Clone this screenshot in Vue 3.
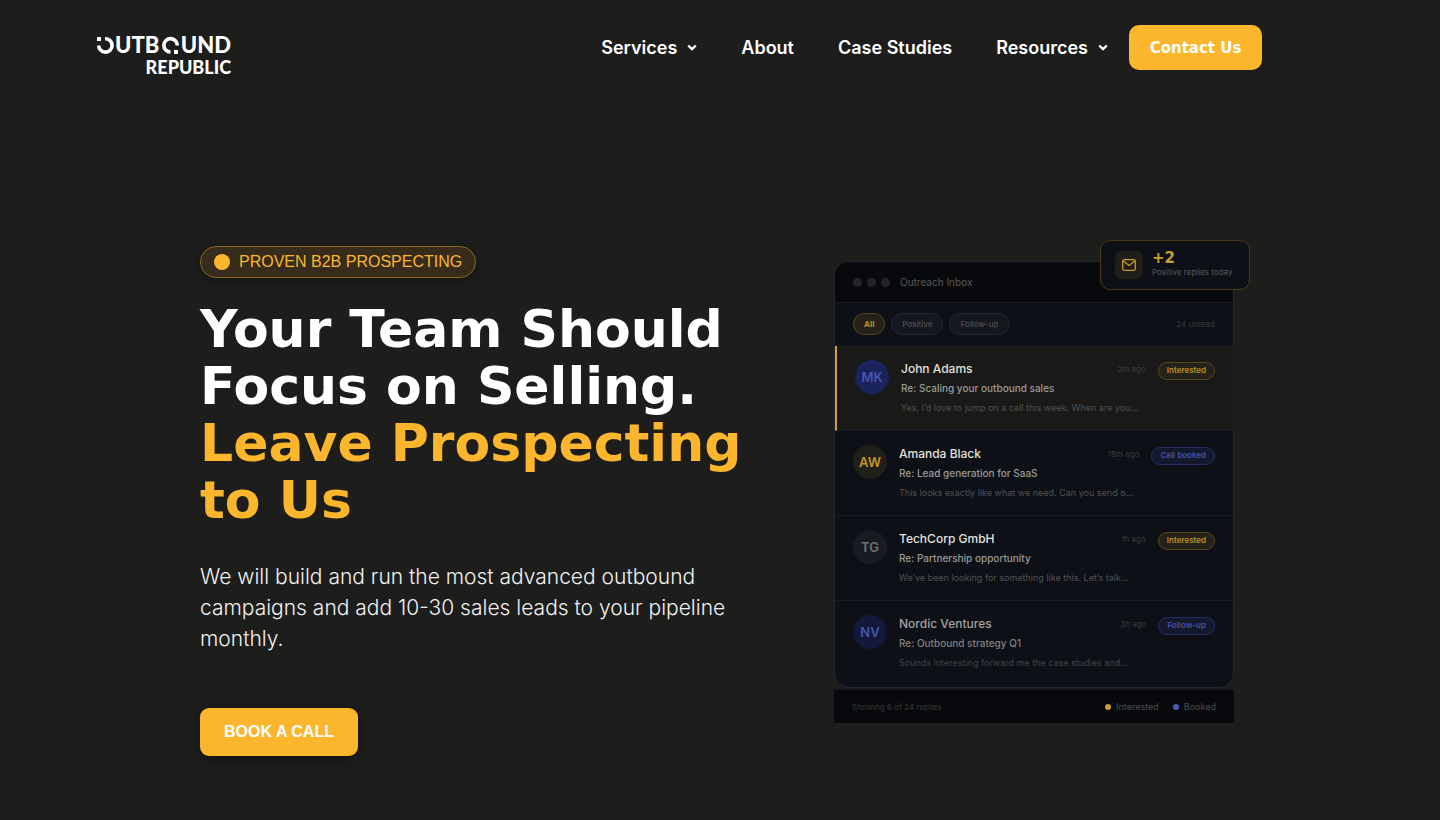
<script setup>
const nav = [
  { label: 'Services', menu: true },
  { label: 'About', menu: false },
  { label: 'Case Studies', menu: false },
  { label: 'Resources', menu: true },
]

const filters = [
  { label: 'All', active: true },
  { label: 'Positive', active: false },
  { label: 'Follow-up', active: false },
]

const replies = [
  { initials: 'MK', tone: 'royal', name: 'John Adams', time: '2m ago', subject: 'Re: Scaling your outbound sales', preview: 'Yes, I’d love to jump on a call this week. When are you…', tag: 'Interested', tagTone: 'gold', active: true },
  { initials: 'AW', tone: 'gold', name: 'Amanda Black', time: '18m ago', subject: 'Re: Lead generation for SaaS', preview: 'This looks exactly like what we need. Can you send o…', tag: 'Call booked', tagTone: 'blue' },
  { initials: 'TG', tone: 'grey', name: 'TechCorp GmbH', time: '1h ago', subject: 'Re: Partnership opportunity', preview: 'We’ve been looking for something like this. Let’s talk…', tag: 'Interested', tagTone: 'gold' },
  { initials: 'NV', tone: 'blue', name: 'Nordic Ventures', time: '3h ago', subject: 'Re: Outbound strategy Q1', preview: 'Sounds interesting forward me the case studies and…', tag: 'Follow-up', tagTone: 'blue', read: true },
]
</script>

<template>
  <div class="page">
    <header class="site-header">
      <a href="#" class="logo" aria-label="Outbound Republic">
        <svg width="140" height="56" viewBox="0 -8 140 56" fill="#fff">
          <rect x="1" y="1" width="4" height="4" />
          <path d="M9 2.700A6.700 6.700 0 1 1 2.700 9.500" fill="none" stroke="#fff" stroke-width="3.600" />
          <text class="logo-main" x="19" y="17">UTB</text>
          <path d="M74.500 16A6.700 6.700 0 1 1 81.300 9.500" fill="none" stroke="#fff" stroke-width="3.600" />
          <rect x="78" y="14" width="4" height="4" />
          <text class="logo-main" x="135" y="17" text-anchor="end">UND</text>
          <text class="logo-sub" x="135" y="38" text-anchor="end">REPUBLIC</text>
        </svg>
      </a>
      <nav class="nav" aria-label="Main">
        <a v-for="item in nav" :key="item.label" href="#" class="nav-link">
          {{ item.label }}
          <svg v-if="item.menu" class="chevron" width="10" height="8" viewBox="0 0 10 8" fill="none" stroke="#fff" stroke-width="2.400" aria-hidden="true">
            <path d="M1.200 1.500 5 5.200 8.800 1.500" />
          </svg>
        </a>
      </nav>
      <a href="#" class="contact">Contact Us</a>
    </header>

    <main class="hero">
      <section class="copy">
        <p class="eyebrow"><span class="eyebrow-dot"></span>PROVEN B2B PROSPECTING</p>
        <h1>Your Team Should<br />Focus on Selling.<br /><span class="accent">Leave Prospecting<br />to Us</span></h1>
        <p class="lead">We will build and run the most advanced outbound<br />campaigns and add 10-30 sales leads to your pipeline<br />monthly.</p>
        <a href="#" class="cta">BOOK A CALL</a>
      </section>

      <section class="inbox-wrap" aria-label="Outreach Inbox">
        <div class="inbox">
          <div class="inbox-head">
            <i class="window-dot"></i><i class="window-dot"></i><i class="window-dot"></i>
            <span class="inbox-title">Outreach Inbox</span>
          </div>
          <div class="filters">
            <button v-for="f in filters" :key="f.label" type="button" class="chip" :class="{ active: f.active }">{{ f.label }}</button>
            <span class="unread">24 unread</span>
          </div>
          <article v-for="r in replies" :key="r.name" class="reply" :class="{ active: r.active, read: r.read }">
            <span class="avatar" :class="r.tone">{{ r.initials }}</span>
            <div class="body">
              <div class="name-line"><span class="name">{{ r.name }}</span><span class="time">{{ r.time }}</span></div>
              <div class="subject">{{ r.subject }}</div>
              <div class="preview">{{ r.preview }}</div>
            </div>
            <span class="tag" :class="r.tagTone">{{ r.tag }}</span>
          </article>
        </div>
        <div class="inbox-foot">
          <span class="showing">Showing 6 of 24 replies</span>
          <span class="legend gold">Interested</span>
          <span class="legend blue">Booked</span>
        </div>
        <div class="toast">
          <span class="toast-icon">
            <svg width="14" height="12" viewBox="0 0 14 12" fill="none" stroke="#c99a27" stroke-width="1.300" stroke-linejoin="round" aria-hidden="true">
              <rect x="0.700" y="0.700" width="12.600" height="10.600" rx="1.500" />
              <path d="M1 1.800 7 6.600 13 1.800" />
            </svg>
          </span>
          <span class="toast-text"><strong>+2</strong><small>Positive replies today</small></span>
        </div>
      </section>
    </main>
  </div>
</template>

<style>
body {
  margin: 0;
  background: #1d1d1b;
}
</style>

<style scoped>
.page {
  min-height: 100vh;
  box-sizing: border-box;
  background: #1d1d1b;
  color: #fff;
  font-family: Inter, "Liberation Sans", sans-serif;
}
a {
  color: inherit;
  text-decoration: none;
}
.site-header {
  display: flex;
  align-items: center;
  height: 45px;
  padding: 25px 178px 0 96px;
}
.logo {
  margin: 16px auto 0 0;
}
.logo svg {
  display: block;
}
.logo-main,
.logo-sub {
  font-family: Lato, sans-serif;
  font-weight: 900;
}
.logo-main {
  font-size: 22px;
}
.logo-sub {
  font-size: 18px;
}
.nav {
  display: flex;
  gap: 44px;
  margin-right: 21px;
}
.nav-link {
  display: flex;
  align-items: center;
  gap: 10px;
  font-size: 18px;
  font-weight: 600;
  line-height: 24px;
}
.contact {
  display: flex;
  align-items: center;
  justify-content: center;
  width: 133px;
  height: 45px;
  border-radius: 10px;
  background: #fbb62d;
  font-family: "DejaVu Sans", sans-serif;
  font-size: 15px;
  font-weight: 700;
}
.hero {
  display: flex;
  justify-content: space-between;
  align-items: flex-start;
  padding: 170px 206px 0 200px;
}
.copy {
  padding-top: 6px;
}
.eyebrow {
  display: inline-flex;
  align-items: center;
  gap: 9px;
  box-sizing: border-box;
  height: 32px;
  margin: 0;
  padding: 0 13px;
  border: 1px solid #8b6820;
  border-radius: 16px;
  background: #372c1b;
  box-shadow: 0 2px 10px rgba(0, 0, 0, 0.3);
  color: #fbb62d;
  font: 16px "Liberation Sans", sans-serif;
}
.eyebrow-dot {
  width: 16px;
  height: 16px;
  border-radius: 50%;
  background: #fbb62d;
}
h1 {
  margin: 23px 0 0;
  font-family: "DejaVu Sans", sans-serif;
  font-size: 52px;
  font-weight: 700;
  line-height: 57px;
  white-space: nowrap;
}
.accent {
  color: #fbb62d;
}
.lead {
  margin: 32px 0 0;
  color: #f2f2f2;
  font-size: 21px;
  font-weight: 300;
  line-height: 31px;
  white-space: nowrap;
}
.cta {
  display: flex;
  align-items: center;
  justify-content: center;
  width: 158px;
  height: 48px;
  margin-top: 54px;
  border-radius: 9px;
  background: #fbb62d;
  box-shadow: 0 2px 10px rgba(0, 0, 0, 0.4);
  font: bold 16px "Liberation Sans", sans-serif;
}
.inbox-wrap {
  position: relative;
  width: 400px;
  padding-top: 21px;
}
.inbox {
  overflow: hidden;
  border: 1px solid #23252b;
  border-radius: 15px;
  background: #0d1017;
}
.inbox-head {
  display: flex;
  align-items: center;
  gap: 5px;
  height: 40px;
  padding: 0 18px;
  border-bottom: 1px solid #1b1d23;
  background: #08090c;
}
.window-dot {
  width: 9px;
  height: 9px;
  border-radius: 50%;
  background: #232427;
}
.inbox-title {
  margin-left: 5px;
  color: #595958;
  font-size: 10px;
}
.filters {
  display: flex;
  align-items: center;
  gap: 6px;
  height: 42px;
  padding: 0 18px;
  border-bottom: 1px solid #17191f;
}
.chip {
  height: 22px;
  padding: 0 10px;
  border: 1px solid #23262d;
  border-radius: 11px;
  background: #14171e;
  color: #4e4f52;
  font: 500 8px Inter, sans-serif;
}
.chip.active {
  border-color: #57441b;
  background: #25211a;
  color: #bd9127;
  font-weight: 700;
}
.unread {
  margin-left: auto;
  color: #37393d;
  font-size: 8px;
}
.reply {
  display: flex;
  align-items: flex-start;
  gap: 12px;
  padding: 14px 18px 12px;
  border-bottom: 1px solid #191c22;
}
.reply:last-child {
  padding-bottom: 13px;
  border-bottom-color: transparent;
}
.reply.active {
  border-left: 2px solid #d0a12c;
  background: #191917;
}
.avatar {
  display: flex;
  flex: none;
  align-items: center;
  justify-content: center;
  width: 34px;
  height: 34px;
  border-radius: 50%;
  font-size: 13px;
  font-weight: 600;
}
.avatar.royal {
  background: #1b235c;
  color: #4655ad;
}
.avatar.gold {
  background: #201f1a;
  color: #c2952a;
}
.avatar.grey {
  background: #181b22;
  color: #737373;
}
.avatar.blue {
  background: #131938;
  color: #4656b5;
}
.body {
  flex: 1;
  min-width: 0;
  white-space: nowrap;
}
.name-line {
  display: flex;
  justify-content: space-between;
  line-height: 18px;
}
.name {
  color: #e2e2de;
  font-size: 12px;
  font-weight: 500;
}
.time {
  color: #3b3c3e;
  font-size: 8px;
}
.subject {
  color: #9b9b98;
  font-size: 10px;
  font-weight: 500;
  line-height: 20px;
}
.preview {
  overflow: hidden;
  color: #505153;
  font-size: 9px;
  line-height: 20px;
}
.read .name {
  color: #a2a2a0;
}
.read .subject {
  color: #80817f;
}
.read .preview {
  color: #414246;
}
.tag {
  flex: none;
  box-sizing: border-box;
  height: 18px;
  margin-top: 2px;
  padding: 0 8px;
  border: 1px solid #594719;
  border-radius: 9px;
  background: #25221a;
  color: #bd9127;
  font-size: 8px;
  font-weight: 600;
  line-height: 15px;
}
.tag.blue {
  border-color: #262f61;
  background: #14182c;
  color: #4453ad;
}
.inbox-foot {
  display: flex;
  align-items: center;
  gap: 14px;
  height: 33px;
  margin-top: 1px;
  padding: 0 18px;
  border-top: 1px solid #131417;
  background: #08090c;
  font-size: 9px;
}
.showing {
  margin-right: auto;
  color: #343638;
  font-size: 8px;
}
.legend {
  display: flex;
  align-items: center;
  gap: 5px;
  color: #4b4c4e;
}
.legend::before {
  width: 6px;
  height: 6px;
  border-radius: 50%;
  background: #c99c2c;
  content: "";
}
.legend.blue::before {
  background: #4858b2;
}
.toast {
  position: absolute;
  top: 0;
  right: -16px;
  display: flex;
  align-items: center;
  gap: 9px;
  box-sizing: border-box;
  width: 150px;
  height: 50px;
  padding: 0 14px;
  border: 1px solid #4a3a19;
  border-radius: 10px;
  background: #0d1017;
}
.toast-icon {
  display: flex;
  flex: none;
  align-items: center;
  justify-content: center;
  width: 28px;
  height: 28px;
  border-radius: 7px;
  background: #1f1e19;
}
.toast-text {
  display: flex;
  flex-direction: column;
  white-space: nowrap;
}
.toast-text strong {
  color: #cba02c;
  font-family: "DejaVu Sans", sans-serif;
  font-size: 15px;
  font-weight: 700;
  line-height: 15px;
}
.toast-text small {
  color: #57585a;
  font-size: 8px;
  line-height: 13px;
}
</style>
